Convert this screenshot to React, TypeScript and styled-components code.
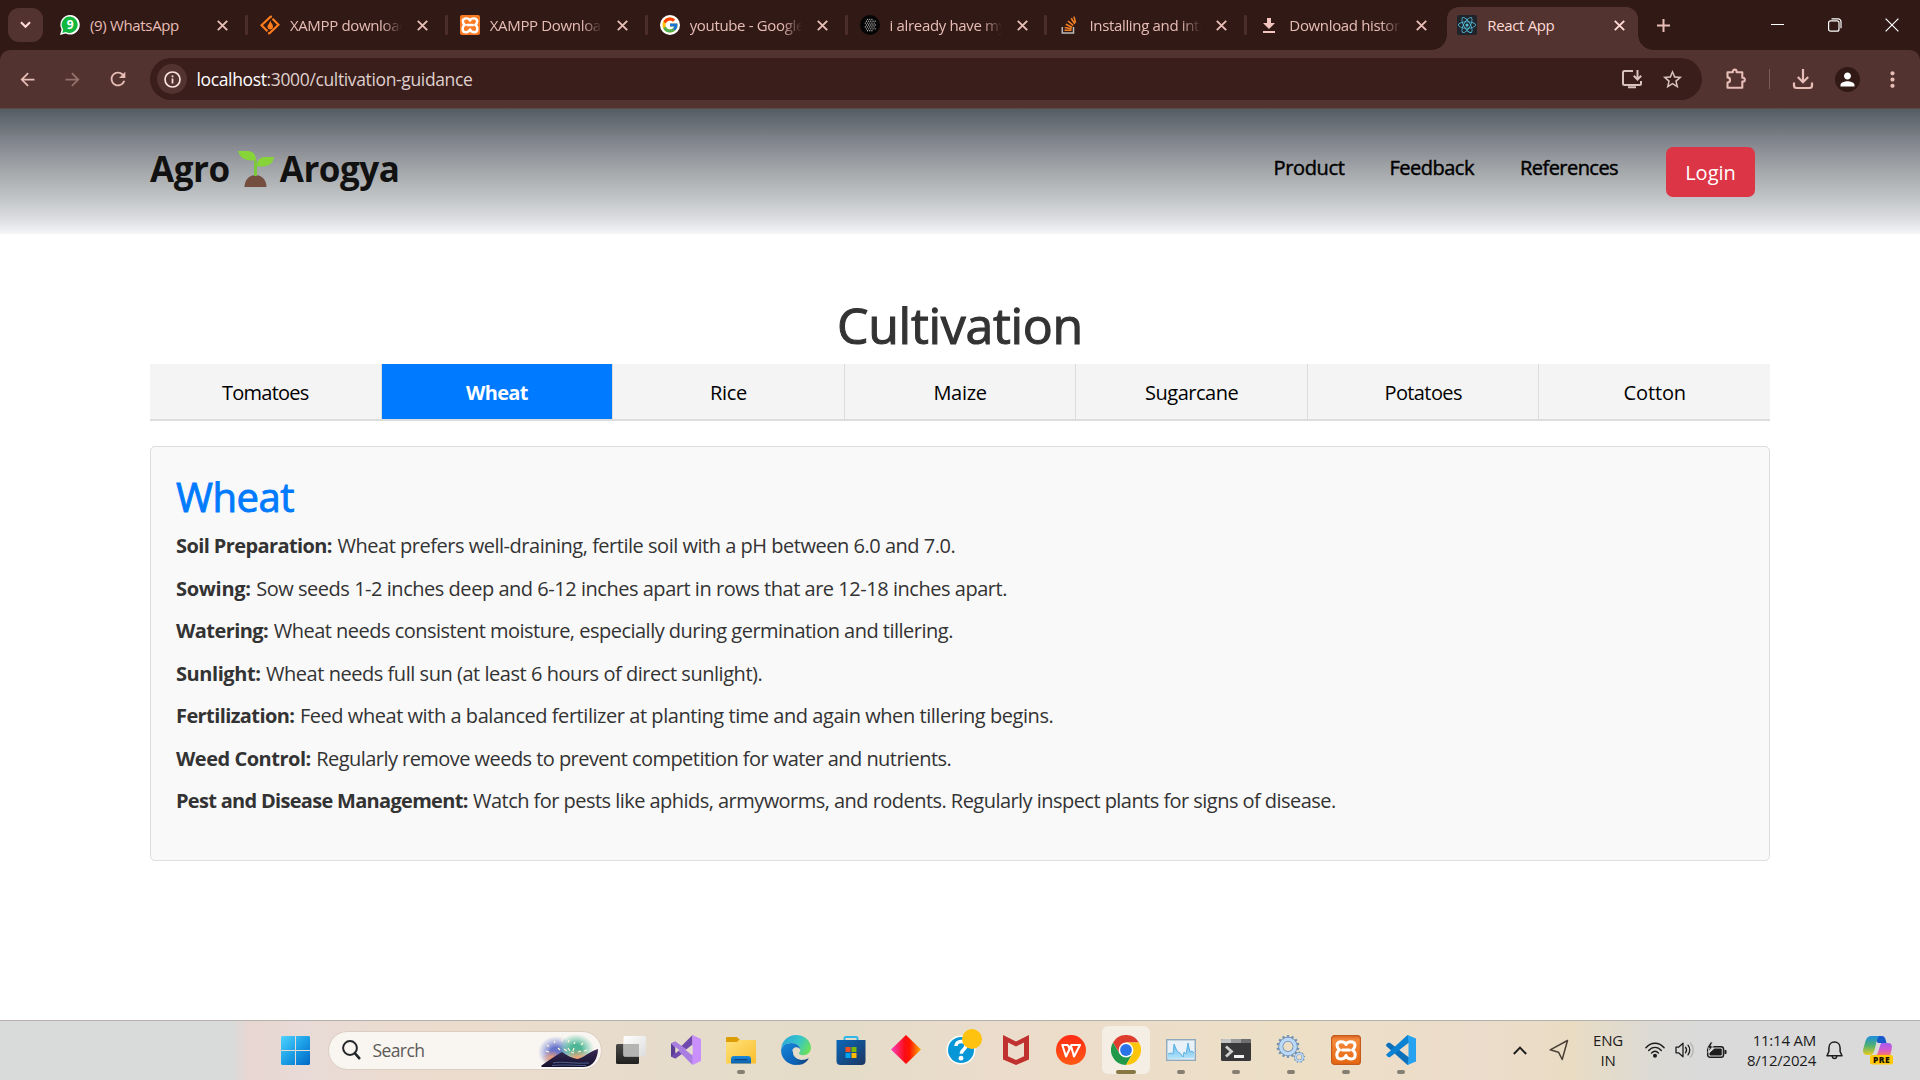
import React from "react";
import styled, { createGlobalStyle } from "styled-components";
import { FcGoogle } from "react-icons/fc";
import { FaReact } from "react-icons/fa";
import {
  MdArrowBack,
  MdArrowForward,
  MdRefresh,
  MdStarBorder,
  MdPerson,
  MdMoreVert,
} from "react-icons/md";

const GlobalStyle = createGlobalStyle`
  *, *::before, *::after { box-sizing: border-box; }
  body { margin: 0; background: #fff; overflow: hidden; }
  #root { font-family: "Open Sans", "Noto Sans", sans-serif; }
  svg { display: block; flex: none; }
`;

const Screen = styled.div`
  width: 1920px;
  height: 1080px;
  display: flex;
  flex-direction: column;
  overflow: hidden;
`;

/* ---------- browser chrome ---------- */

const TabStrip = styled.div`
  height: 50px;
  flex: none;
  display: flex;
  background: #311915;
  color: #e7bdb6;
`;

const TabSearch = styled.div`
  width: 35px;
  height: 34px;
  margin: 8px 5px 0 8px;
  border-radius: 11px;
  background: #523330;
  display: flex;
  align-items: center;
  justify-content: center;
`;

const BrowserTab = styled.div<{ $active?: boolean }>`
  position: relative;
  width: ${(p) => (p.$active ? 191 : 199.9)}px;
  height: ${(p) => (p.$active ? 43 : 50)}px;
  margin-top: ${(p) => (p.$active ? 7 : 0)}px;
  padding: ${(p) => (p.$active ? "0 12px 7px 10px" : "0 0 0 12px")};
  border-radius: 12px 12px 0 0;
  background: ${(p) => (p.$active ? "#523330" : "transparent")};
  color: ${(p) => (p.$active ? "#ffdad5" : "inherit")};
  display: flex;
  align-items: center;

  &::before,
  &::after {
    content: "";
    display: ${(p) => (p.$active ? "block" : "none")};
    position: absolute;
    bottom: 0;
    width: 15px;
    height: 15px;
  }
  &::before {
    left: -15px;
    background: radial-gradient(circle at 0 0, transparent 14.5px, #523330 15px);
  }
  &::after {
    right: -15px;
    background: radial-gradient(circle at 100% 0, transparent 14.5px, #523330 15px);
  }
`;

const Favicon = styled.span`
  width: 20px;
  height: 20px;
  flex: none;
  display: flex;
  align-items: center;
  justify-content: center;
`;

const TabTitle = styled.span<{ $fade?: boolean }>`
  width: 112px;
  margin: 0 15px 0 10px;
  font-size: 15px;
  line-height: 24px;
  letter-spacing: -0.34px;
  white-space: nowrap;
  overflow: hidden;
  mask-image: ${(p) => (p.$fade ? "linear-gradient(90deg, #000 82%, transparent)" : "none")};
`;

const TabDivider = styled.span`
  width: 3px;
  height: 20px;
  margin-left: auto;
  border-radius: 1px;
  background: #4b2d29;
`;

const NewTab = styled.div`
  width: 40px;
  margin-left: 5px;
  display: flex;
  align-items: center;
  justify-content: center;
`;

const WindowControls = styled.div`
  margin-left: auto;
  display: flex;
  color: #fff;
`;

const WindowButton = styled.span`
  width: 57px;
  height: 49px;
  display: flex;
  align-items: center;
  justify-content: center;
`;

const ToolbarBack = styled.div`
  height: 59px;
  flex: none;
  background: #311915;
`;

const Toolbar = styled.div`
  height: 59px;
  padding: 8px 0 0 12px;
  display: flex;
  border-radius: 10px 10px 0 0;
  border-bottom: 1px solid #5e4a47;
  background: #523330;
  color: #e7bdb6;
`;

const ToolButton = styled.span<{ $w: number; $dim?: boolean }>`
  width: ${(p) => p.$w}px;
  height: 42px;
  flex: none;
  display: flex;
  align-items: center;
  justify-content: center;
  opacity: ${(p) => (p.$dim ? 0.45 : 1)};
`;

const Omnibox = styled.div`
  width: 1552px;
  height: 42px;
  flex: none;
  padding: 0 10px 0 7px;
  display: flex;
  align-items: center;
  border-radius: 21px;
  background: #3a1e1b;
  color: #d8c2be;
`;

const SiteInfo = styled.span`
  width: 30px;
  height: 30px;
  display: flex;
  align-items: center;
  justify-content: center;
  border-radius: 50%;
  background: #523330;
  color: #fbe3df;
`;

const Url = styled.span`
  flex: 1;
  padding: 0 0 1px 9.500px;
  font-size: 17.5px;
  letter-spacing: -0.36px;
  color: #dfd0cd;

  b {
    font-weight: 400;
    color: #fff;
  }
`;

const OmniIcon = styled.span`
  width: 40px;
  display: flex;
  justify-content: center;
`;

const ToolDivider = styled.span`
  width: 1px;
  height: 20px;
  flex: none;
  margin: 11px 0;
  background: #7d5c57;
`;

const Avatar = styled.span`
  width: 25px;
  height: 25px;
  display: flex;
  align-items: center;
  justify-content: center;
  border-radius: 50%;
  background: #311915;
  color: #fff;
`;

/* ---------- web page ---------- */

const Page = styled.div`
  flex: 1;
  background: #fff;
`;

const Header = styled.header`
  height: 125px;
  padding: 0 165px 0 150px;
  display: flex;
  align-items: center;
  justify-content: space-between;
  background: linear-gradient(180deg, #545d64 0%, #83868e 27%, #9fa3a6 46%, #c4c7ca 73%, #dcdde0 88%, #f5f6f8 100%);
`;

const Brand = styled.div`
  display: flex;
  align-items: center;
  padding-bottom: 6px;
  font-size: 35px;
  line-height: 52px;
  font-weight: 700;
  letter-spacing: -0.45px;
  color: #111;

  svg {
    margin: 0 6px 0 8px;
  }
`;

const Nav = styled.nav`
  display: flex;
  align-items: center;
`;

const NavLink = styled.a<{ $w: number; $ls: number }>`
  width: ${(p) => p.$w}px;
  padding-bottom: 7px;
  font-size: 20px;
  line-height: 30px;
  -webkit-text-stroke: 0.45px #000;
  letter-spacing: ${(p) => p.$ls}px;
  color: #000;
`;

const LoginButton = styled.button`
  height: 50px;
  width: 89px;
  padding: 2px 0 0;
  border: 0;
  border-radius: 7px;
  background: #dc3545;
  color: #fff;
  font: 400 20px/30px "Open Sans", "Noto Sans", sans-serif;
`;

const Main = styled.main`
  padding: 61px 150px 0;
`;

const Title = styled.h1`
  margin: 0 0 9px;
  font-size: 50px;
  line-height: 60px;
  font-weight: 400;
  -webkit-text-stroke: 1.100px #333;
  letter-spacing: -0.3px;
  text-align: center;
  color: #333;
`;

const CropTabs = styled.div`
  display: flex;
  height: 57px;
  margin-bottom: 25px;
  border-bottom: 2px solid #ddd;
`;

const CropTab = styled.div<{ $active?: boolean; $ls: number }>`
  flex: 1;
  padding: 14px 0 11px;
  border-right: 1px solid #ddd;
  background: ${(p) => (p.$active ? "#007bff" : "#f4f4f4")};
  color: ${(p) => (p.$active ? "#fff" : "#000")};
  font-size: 20px;
  line-height: 30px;
  font-weight: ${(p) => (p.$active ? 700 : 400)};
  letter-spacing: ${(p) => p.$ls}px;
  text-align: center;

  &:last-child {
    border-right: 0;
  }
`;

const Card = styled.section`
  height: 415px;
  padding: 26px 25px 0;
  border: 1px solid #ddd;
  border-radius: 5px;
  background: #f9f9f9;
`;

const CardTitle = styled.h2`
  margin: 0 0 10px;
  font-size: 40px;
  line-height: 48px;
  font-weight: 400;
  -webkit-text-stroke: 0.9px #007bff;
  letter-spacing: -0.5px;
  color: #007bff;
`;

const Tip = styled.p<{ $ls: number; $bls: number }>`
  margin: 0 0 12.5px;
  font-size: 20px;
  line-height: 30px;
  letter-spacing: ${(p) => p.$ls}px;
  white-space: nowrap;
  color: #333;

  strong {
    margin-right: 0.8px;
    font-weight: 700;
    letter-spacing: ${(p) => p.$bls}px;
  }
`;

/* ---------- taskbar ---------- */

const Taskbar = styled.footer`
  height: 60px;
  flex: none;
  display: flex;
  align-items: center;
  padding: 0 0 1px 281px;
  border-top: 1px solid #b5b0ab;
  background: linear-gradient(
    90deg, #d9dada 0, #d9dada 232px, #e7d6d2 248px, #e8dad6 300px, #ecdccf 420px, #e6dccb 680px,
    #e4dcc8 830px, #ebdccb 1000px, #ecdfc6 1300px, #ecdccb 1480px, #e9dcc3 1570px, #dbdad6 1660px, #dadada 1700px
  );
  color: #1c1c1c;
`;

const SearchPill = styled.div`
  width: 274px;
  height: 39px;
  margin: 0 2.500px 0 17.500px;
  padding-left: 13px;
  display: flex;
  align-items: center;
  border: 1px solid #dccdc1;
  border-radius: 20px;
  background: #f9f5f0;
  overflow: hidden;
`;

const SearchLabel = styled.span`
  width: 165px;
  margin-left: 12px;
  font-size: 17.5px;
  letter-spacing: -0.6px;
  color: #5c5a58;
`;

const Apps = styled.div`
  display: flex;
  margin-left: -0.5px;
`;

const AppSlot = styled.div<{ $focused?: boolean }>`
  width: 48px;
  height: 48px;
  margin: 0 3.5px;
  display: flex;
  flex-direction: column;
  align-items: center;
  border-radius: 6px;
  background: ${(p) => (p.$focused ? "#f5eee4" : "transparent")};

  svg {
    margin: 9px 0 5px;
  }
`;

const Running = styled.span<{ $focused?: boolean }>`
  width: ${(p) => (p.$focused ? 20 : 8)}px;
  height: 4px;
  border-radius: 2px;
  background: ${(p) => (p.$focused ? "#877744" : "#857e72")};
`;

const Tray = styled.div`
  margin-left: auto;
  padding-right: 18px;
  display: flex;
  align-items: center;
`;

const TrayItem = styled.span<{ $w: number }>`
  width: ${(p) => p.$w}px;
  display: flex;
  justify-content: center;
`;

const TrayText = styled.div<{ $w: number; $right?: boolean; $ls: number }>`
  width: ${(p) => p.$w}px;
  padding-bottom: 1px;
  font-size: 15px;
  line-height: 20px;
  letter-spacing: ${(p) => p.$ls}px;
  white-space: nowrap;
  text-align: ${(p) => (p.$right ? "right" : "center")};
`;

/* ---------- drawings ---------- */

const CloseMark = () => (
  <svg width="11" height="11" viewBox="0 0 11 11" stroke="currentColor" strokeWidth="1.9">
    <path d="M.8.8l9.4 9.4M10.2.8L.8 10.2" />
  </svg>
);

const WhatsAppIcon = () => (
  <svg width="20" height="20" viewBox="0 0 20 20">
    <path d="M10.2 0A9.8 9.8 0 0 0 1.6 14.6L0 20l5.600-1.4A9.8 9.8 0 1 0 10.200 0z" fill="#fff" />
    <path d="M10.200 1.500A8.200 8.200 0 0 0 3.200 14.400L2.200 17.900l3.600-.9A8.200 8.200 0 1 0 10.200 1.500z" fill="#12b83e" />
    <text x="10.2" y="14.200" textAnchor="middle" fontSize="12" fontWeight="700" fill="#fff">9</text>
  </svg>
);

const SourceForgeIcon = () => (
  <svg width="20" height="20" viewBox="0 0 20 20" fill="none" stroke="#ff7d1a" strokeWidth="2.2">
    <path d="M12 1.500L10.500 1.800 1.500 10.300 7.500 16.300M8 18.500l1.500-.3 9-8.500L12.500 3.700" />
    <path d="M10.300 5.500c.5 2.500 2.700 3.500 2.700 6 0 1.800-1.200 3-2.800 3S7.500 13.300 7.500 11.700c0-1.600 1.600-2.500 2.800-6.200z" fill="#ff7d1a" stroke="none" />
  </svg>
);

const XamppTile = styled.span`
  width: 20px;
  height: 20px;
  display: flex;
  align-items: center;
  justify-content: center;
  border-radius: 2px;
  background: #fb7a24;
  color: #fff;
`;

const XamppMark = () => (
  <g fill="none" stroke="#fff" strokeLinejoin="round" strokeLinecap="round">
    <path
      d="M15 9.500C13.800 6 6.500 5.500 6 10c-.1 2 .9 3.600 2.500 5C4.500 17.500 5 24 9.500 24c3 0 4.800-1.200 5.500-3.500.7 2.300 2.500 3.500 5.500 3.500C25 24 25.500 17.500 21.500 15c1.600-1.400 2.600-3 2.500-5-.5-4.500-7.800-4-9-.5z"
      strokeWidth="3"
    />
    <path d="M11.500 15h7" strokeWidth="3" />
  </g>
);

const GoogleDisc = styled.span`
  width: 20px;
  height: 20px;
  display: flex;
  align-items: center;
  justify-content: center;
  border-radius: 50%;
  background: #fff;
`;

const DotsIcon = () => (
  <svg width="20" height="20" viewBox="0 0 20 20">
    <circle cx="10" cy="10" r="10" fill="#050505" />
    {[0, 1, 2, 3, 4, 5, 6].map((r) =>
      [0, 1, 2, 3, 4].map((c) => {
        const x = 5.300 + c * 2.200 + (r % 2 ? 1.100 : 0);
        const y = 4.300 + r * 1.900;
        return Math.hypot(x - 10, y - 10) < 6.5 ? <circle key={`${r}${c}`} cx={x} cy={y} r=".65" fill="#c9c9c9" /> : null;
      })
    )}
  </svg>
);

const StackIcon = () => (
  <svg width="16" height="18" viewBox="0 0 16 18" fill="none">
    <path d="M1.300 11v5.900h11.200V11" stroke="#bcbbbb" strokeWidth="1.500" />
    <path d="M3.500 14.300h7M3.700 11.500l6.900 1.300M4.800 8.300l6.300 2.900M7 5l5.200 4.400M10.200 2.300l3.600 5.600M13 .6l1.500 6" stroke="#f48024" strokeWidth="1.600" />
  </svg>
);

const DownloadGlyph = () => (
  <svg width="12" height="15" viewBox="0 0 12 15" fill="#f2c6bf">
    <path d="M4 0h4v5h4l-6 6-6-6h4zM0 13h12v2H0z" />
  </svg>
);

const ReactTile = styled.span`
  width: 20px;
  height: 20px;
  display: flex;
  align-items: center;
  justify-content: center;
  border-radius: 2px;
  background: #20232a;
  color: #53c1de;
`;

const InstallIcon = () => (
  <svg width="22" height="20" viewBox="0 0 22 20" fill="none" stroke="currentColor" strokeWidth="2">
    <path d="M12 2H3.500A1.500 1.500 0 0 0 2 3.500v11A1.500 1.500 0 0 0 3.500 16h15a1.500 1.500 0 0 0 1.500-1.500V12M16.500 1v9M12.800 6.800l3.700 3.700 3.700-3.700M7 18.300h8" />
  </svg>
);

const PuzzleIcon = () => (
  <svg width="22" height="22" viewBox="0 0 22 22" fill="none" stroke="currentColor" strokeWidth="2.100" strokeLinejoin="round">
    <path d="M2.500 4.200h5.300V3.500a1.900 1.900 0 0 1 3.800 0v.7h5.700v5.600h.6a1.900 1.900 0 0 1 0 3.800h-.6v6.200H2.500v-5.200c3.400-.2 3.400-5 0-5.200z" />
  </svg>
);

const ToolDownloadIcon = () => (
  <svg width="22" height="22" viewBox="0 0 22 22" fill="none" stroke="currentColor" strokeWidth="2.200">
    <path d="M11 1v13M5.800 9l5.200 5.200L16.200 9M2 14.500v3A2.500 2.500 0 0 0 4.500 20h13a2.500 2.500 0 0 0 2.500-2.500v-3" />
  </svg>
);

const InfoIcon = () => (
  <svg width="17" height="17" viewBox="0 0 17 17" fill="none" stroke="currentColor" strokeWidth="1.700">
    <circle cx="8.500" cy="8.500" r="7.500" />
    <path d="M8.500 7.500v5M8.500 4.500v1.700" />
  </svg>
);

const Seedling = () => (
  <svg width="36" height="36" viewBox="0 0 36 36">
    <path d="M6.500 36C6.500 29 11 24 17.500 24S28.500 29 28.500 36z" fill="#744e3f" />
    <path d="M17.500 25V12" stroke="#7bc93a" strokeWidth="3" />
    <path d="M0 0h10c5 0 8 3.500 8 9.500C7 10 2 7 0 0zM36 6H28c-6 0-9 3-9 9.500C30 16 35 13 36 6z" fill="#86d437" />
    <path d="M17.500 18V9" stroke="#7bc93a" strokeWidth="2.600" />
  </svg>
);

const WindowsLogo = () => (
  <svg width="29" height="29" viewBox="0 0 29 29">
    <defs>
      <linearGradient id="win" x1="0" y1="0" x2="1" y2="1">
        <stop offset="0" stopColor="#4fd3ff" />
        <stop offset=".5" stopColor="#1c9fe6" />
        <stop offset="1" stopColor="#0067c5" />
      </linearGradient>
    </defs>
    <path d="M1 0h13v14H0V1zM15 0h13l1 1v13H15zM0 15h14v14H1l-1-1zM15 15h14v13l-1 1H15z" fill="url(#win)" />
  </svg>
);

const Magnifier = () => (
  <svg width="19" height="20" viewBox="0 0 19 20" fill="none" stroke="#23272a">
    <circle cx="8" cy="8" r="6.900" strokeWidth="2" />
    <path d="M12.800 13.200l4.400 5" strokeWidth="2.600" strokeLinecap="round" />
  </svg>
);

const SearchArt = () => (
  <svg width="62" height="37" viewBox="0 0 62 37">
    <defs>
      <radialGradient id="blobA"><stop offset=".3" stopColor="#6874cc" /><stop offset="1" stopColor="#7f8fe0" stopOpacity="0" /></radialGradient>
      <radialGradient id="blobB"><stop offset=".3" stopColor="#4fb597" /><stop offset="1" stopColor="#5ac8a8" stopOpacity="0" /></radialGradient>
      <radialGradient id="blobC"><stop offset="0" stopColor="#f4a070" /><stop offset="1" stopColor="#f4a070" stopOpacity="0" /></radialGradient>
      <linearGradient id="hill" x1="0" y1="0" x2="0" y2="1"><stop offset="0" stopColor="#3a2a55" /><stop offset="1" stopColor="#14122e" /></linearGradient>
    </defs>
    <ellipse cx="18" cy="20" rx="18" ry="16" fill="url(#blobA)" />
    <ellipse cx="38" cy="17" rx="18" ry="15" fill="url(#blobB)" />
    <ellipse cx="40" cy="26" rx="14" ry="9" fill="url(#blobC)" />
    <ellipse cx="14" cy="26" rx="10" ry="8" fill="url(#blobC)" />
    <path d="M9 13l2 1.500M16 9l1 2M24 7v2.500M31 8l-1 2.500M8 19l3 1M37 10l-1 2M45 11l-2 2M30 16l2 3M36 16l-1 3M40 20l3-1M26 17l3 2M49 18l-3 1M20 16l2 2M33 20l3 1" stroke="#fff6d8" strokeWidth="1.200" />
    <path d="M3 34C9 29 16 25 24 20c6 4 10 6 15 7 7-1 11-7 21-10 0 9-5 18-14 18H4z" fill="url(#hill)" />
    <path d="M15 31c10-2 20 1 36 0M14 33.500c12-1 20 0 34 0" fill="none" stroke="#5d74a8" strokeWidth=".8" />
  </svg>
);

const TaskViewIcon = () => (
  <svg width="30" height="30" viewBox="0 0 30 30">
    <defs>
      <linearGradient id="tvd" x1="0" y1="0" x2="0" y2="1"><stop offset="0" stopColor="#4a4a48" /><stop offset="1" stopColor="#20201f" /></linearGradient>
      <linearGradient id="tvl" x1="0" y1="0" x2="1" y2="1"><stop offset="0" stopColor="#fff" /><stop offset="1" stopColor="#dcdcdc" /></linearGradient>
    </defs>
    <rect x="0" y="9" width="23" height="20" rx="1.500" fill="url(#tvd)" />
    <rect x="7.500" y="1" width="22.500" height="20.500" rx="1.500" fill="url(#tvl)" />
    <path d="M7.500 9H23v12.500H9a1.500 1.500 0 0 1-1.500-1.500z" fill="#b4b4b2" />
  </svg>
);

const VisualStudioIcon = () => (
  <svg width="30" height="30" viewBox="0 0 30 30">
    <path d="M0 8.500L4.500 6.500V23.500L0 21.500z" fill="#5b3c94" />
    <path d="M4.500 23.500L0 21.500 21.500 0v11.500z" fill="#6f4aac" />
    <path d="M0 8.500L4.500 6.500 23 19.500 21.500 30z" fill="#a87ee0" />
    <path d="M21.500 0L30 4v22l-8.500 4z" fill="#c98ffa" />
    <path d="M21.500 9.500V20.500L14.500 15z" fill="#e6dccb" />
    <path d="M4.500 12v6.500L8.300 15z" fill="#e6dccb" />
  </svg>
);

const ExplorerIcon = () => (
  <svg width="30" height="30" viewBox="0 0 30 30">
    <defs>
      <linearGradient id="fold" x1="0" y1="0" x2="1" y2="1"><stop offset="0" stopColor="#ffe07a" /><stop offset="1" stopColor="#f9bf2c" /></linearGradient>
      <linearGradient id="foldb" x1="0" y1="0" x2="0" y2="1"><stop offset="0" stopColor="#1a8ad8" /><stop offset="1" stopColor="#0c61ae" /></linearGradient>
    </defs>
    <path d="M1 2h10l3 3h15a1 1 0 0 1 1 1v8H0V3a1 1 0 0 1 1-1z" fill="#dd9d06" />
    <path d="M0 7h11l2-2h17v23a.5.5 0 0 1-.5.5H.5A.5.5 0 0 1 0 28z" fill="url(#fold)" />
    <path d="M5 28.500V24a3 3 0 0 1 3-3h14a3 3 0 0 1 3 3v4.500z" fill="url(#foldb)" />
    <path d="M8.500 24.700h13" stroke="#0a4a8c" strokeWidth="1.400" />
  </svg>
);

const EdgeIcon = () => (
  <svg width="30" height="30" viewBox="0 0 30 30">
    <defs>
      <linearGradient id="ea" x1="0" y1=".2" x2="1" y2=".6"><stop offset="0" stopColor="#2aa5dc" /><stop offset=".55" stopColor="#36c6c8" /><stop offset="1" stopColor="#6be05a" /></linearGradient>
      <linearGradient id="eb" x1="0" y1="0" x2=".6" y2="1"><stop offset="0" stopColor="#1788d8" /><stop offset="1" stopColor="#0b5fb5" /></linearGradient>
      <linearGradient id="ec" x1="0" y1="0" x2="1" y2="0"><stop offset="0" stopColor="#0f6cc0" /><stop offset="1" stopColor="#123f7d" /></linearGradient>
    </defs>
    <path d="M.2 13.500C1 5.500 7.500 0 15 0c8.500 0 15 6 15 12.800 0 4.500-3.500 7.400-7.500 7.400-3 0-4.500-.9-4.500-2 0-.8 1.300-1.200 1.300-3.500C19.300 11 15.500 8 10.500 8 5.500 8 1.500 10.500.2 13.500z" fill="url(#ea)" />
    <path d="M.1 14.500C1.200 10.800 5 8 10.500 8c5 0 8.800 3 8.800 6.500-1.800-3.200-8.300-3.500-8.300 3.500 0 6 5 11.600 8.500 11-1.500.7-3.100 1-4.500 1C6.500 30-.5 23 .1 14.500z" fill="url(#eb)" />
    <path d="M12.300 15c-2 7 5 10.800 10.500 9.800 2.500-.5 4-1.300 5-1.600C26 27 21 30.500 17.500 29.500 12 28 8 20 12.300 15z" fill="url(#ec)" />
  </svg>
);

const StoreIcon = () => (
  <svg width="30" height="30" viewBox="0 0 30 30">
    <defs><linearGradient id="store" x1="0" y1="0" x2="1" y2="1"><stop offset="0" stopColor="#0a68b8" /><stop offset="1" stopColor="#1d3561" /></linearGradient></defs>
    <path d="M8.500 7V3.500a1.500 1.500 0 0 1 1.500-1.500h10a1.500 1.500 0 0 1 1.500 1.500V7" fill="none" stroke="#30b7ea" strokeWidth="2" />
    <path d="M.5 5h29v21a4 4 0 0 1-4 4h-21a4 4 0 0 1-4-4z" fill="url(#store)" />
    <path d="M9.500 12h5v5h-5z" fill="#f25022" />
    <path d="M15.500 12h5v5h-5z" fill="#7fba00" />
    <path d="M9.500 18h5v5h-5z" fill="#00a4ef" />
    <path d="M15.500 18h5v5h-5z" fill="#ffb900" />
  </svg>
);

const DiamondIcon = () => (
  <svg width="30" height="30" viewBox="0 0 30 30">
    <defs><linearGradient id="dia"><stop offset="0" stopColor="#ff3fc0" /><stop offset=".45" stopColor="#fb0d18" /><stop offset=".62" stopColor="#ff1500" /><stop offset="1" stopColor="#ffae00" /></linearGradient></defs>
    <path d="M15 0l15 14.500L15 29 0 14.500z" fill="url(#dia)" />
  </svg>
);

const HelpIcon = () => (
  <svg width="30" height="30" viewBox="0 0 30 30" overflow="visible">
    <circle cx="15" cy="15" r="14.500" fill="#fff" />
    <circle cx="15" cy="15" r="13" fill="#0796d6" />
    <path d="M10 11c0-6 10-6 10-.5 0 4-4.700 4-4.700 8.300" fill="none" stroke="#fff" strokeWidth="3.600" />
    <circle cx="15" cy="23.200" r="2.400" fill="#fff" />
    <circle cx="26" cy="4" r="10" fill="#ffc20e" />
  </svg>
);

const McAfeeIcon = () => (
  <svg width="28" height="30" viewBox="0 0 28 30">
    <path d="M1 0l13 6.500L27 0v24.500L14 30 1 24.500zM6 7.500v13.800l8 3.700 8-3.700V7.500l-8 4z" fill="#c0302f" fillRule="evenodd" />
  </svg>
);

const WpsIcon = () => (
  <svg width="30" height="30" viewBox="0 0 30 30">
    <defs><linearGradient id="wps" x1="0" y1="0" x2="0" y2="1"><stop offset="0" stopColor="#ff2a14" /><stop offset="1" stopColor="#ff5a14" /></linearGradient></defs>
    <circle cx="15" cy="15" r="15" fill="url(#wps)" />
    <path d="M5.500 10h6.500M6.300 10l3.700 11.500L15 11l3 10.500L24 10h-9.500M12 10l2 5" fill="none" stroke="#fff" strokeWidth="2.100" strokeLinejoin="round" />
  </svg>
);

const ChromeIcon = () => (
  <svg width="30" height="30" viewBox="0 0 30 30">
    <circle cx="15" cy="15" r="15" fill="#fff" />
    <path d="M15 7.500h13A15 15 0 0 0 2 7.500l6.500 11.250z" fill="#df3c30" />
    <path d="M2 7.500A15 15 0 0 0 15 30l6.500-11.250h-13z" fill="#22994a" />
    <path d="M28 7.500H15l6.500 11.250L15 30A15 15 0 0 0 28 7.500z" fill="#fdc60b" />
    <circle cx="15" cy="15" r="7.400" fill="#fff" />
    <circle cx="15" cy="15" r="5.900" fill="#2a74e8" />
  </svg>
);

const PerfIcon = () => (
  <svg width="30" height="30" viewBox="0 0 30 30">
    <defs><linearGradient id="perf" x1="0" y1="0" x2="0" y2="1"><stop offset="0" stopColor="#5fb9ea" /><stop offset="1" stopColor="#b6e4fb" /></linearGradient></defs>
    <rect x=".7" y="4.700" width="28.600" height="20.600" fill="#e8f1f7" stroke="#8fa9bd" strokeWidth="1.400" />
    <path d="M2 24v-5l3-1 2 1 1-10 3 7 4 3 2 3 1-5 2 2 2-11 2 9 2-1 2 2v5z" fill="url(#perf)" />
    <path d="M2 19l3-1 2 1 1-10 3 7 4 3 2 3 1-5 2 2 2-11 2 9 2-1 2 2" fill="none" stroke="#4aa6db" strokeWidth=".8" />
  </svg>
);

const TerminalIcon = () => (
  <svg width="30" height="30" viewBox="0 0 30 30">
    <rect y="4" width="30" height="22" rx="1.500" fill="#38383a" />
    <path d="M1.500 4H10v4H0V5.500A1.500 1.500 0 0 1 1.500 4z" fill="#c4c4c4" />
    <path d="M10 4h10v4H10z" fill="#999" />
    <path d="M20 4h8.500A1.500 1.500 0 0 1 30 5.500V8H20z" fill="#6e6e6e" />
    <path d="M5 11.500l5.500 5-5.500 5" fill="none" stroke="#cfcfcf" strokeWidth="2.800" />
    <path d="M13 20h10v3H13z" fill="#f2f2f2" />
  </svg>
);

const Gear = ({ cx, cy, r, teeth }: { cx: number; cy: number; r: number; teeth: number }) => (
  <g transform={`translate(${cx} ${cy})`}>
    {Array.from({ length: teeth }, (_, i) => (
      <rect key={i} x={-r * 0.13} y={-r * 1.3} width={r * 0.26} height={r * 0.4} fill="#7596b8" transform={`rotate(${(360 / teeth) * i})`} />
    ))}
    <circle r={r * 0.82} fill="none" stroke="#6285aa" strokeWidth={r * 0.56} />
    <circle r={r * 0.82} fill="none" stroke="#bcd8f8" strokeWidth={r * 0.4} />
  </g>
);

const GearsIcon = () => (
  <svg width="30" height="30" viewBox="0 0 30 30">
    <Gear cx={12} cy={11.5} r={8.8} teeth={14} />
    <Gear cx={23.3} cy={22.3} r={4.5} teeth={9} />
  </svg>
);

const XamppApp = () => (
  <svg width="30" height="30" viewBox="0 0 30 30">
    <defs><linearGradient id="xa" x1="0" y1="0" x2="0" y2="1"><stop offset="0" stopColor="#d9672a" /><stop offset=".15" stopColor="#f58a3c" /><stop offset="1" stopColor="#e5660f" /></linearGradient></defs>
    <rect x=".6" y=".6" width="28.800" height="28.800" rx="3" fill="url(#xa)" stroke="#c45a1c" strokeWidth="1.200" />
    <XamppMark />
  </svg>
);

const VsCodeIcon = () => (
  <svg width="30" height="30" viewBox="0 0 30 30">
    <path d="M0 9.700l2-1.900 1.900-.1L23 22.500V29l-1.500 1L.2 11z" fill="#0c6fba" />
    <path d="M0 19.800L21.500 0 23 1v6.500L3.900 22.200l-1.900-.1z" fill="#0b82d2" />
    <path d="M21.500 0L30 3.500v23L21.500 30l1-7.500v-15z" fill="#26a2f0" />
  </svg>
);

const ChevronUp = () => (
  <svg width="14" height="9" viewBox="0 0 14 9" fill="none" stroke="#1c1c1c" strokeWidth="1.900"><path d="M.8 8L7 1.600 13.200 8" /></svg>
);

const LocationIcon = () => (
  <svg width="20" height="22" viewBox="0 0 20 22" fill="none" stroke="#4a4036" strokeWidth="1.500" strokeLinejoin="round"><path d="M18.500 1.500L1.200 10.800l8.300 2.400 3.700 7.300z" /></svg>
);

const WifiIcon = () => (
  <svg width="20" height="16" viewBox="0 0 20 16" fill="none" stroke="#1c1c1c" strokeWidth="1.400" strokeLinecap="round">
    <path d="M.9 5.800c5-6 13.200-6 18.200 0M3.700 8.500c3.600-4.200 9-4.200 12.600 0M6.500 11.100c2-2.400 5-2.400 7 0" />
    <circle cx="10" cy="13.700" r="1.300" fill="#1c1c1c" />
  </svg>
);

const VolumeIcon = () => (
  <svg width="20" height="18" viewBox="0 0 20 18" fill="none" stroke="#1c1c1c" strokeWidth="1.300" strokeLinecap="round" strokeLinejoin="round">
    <path d="M1 6.200h2.500L8 2.200v13.600l-4.500-4H1zM10.500 6.200c1.200 1.600 1.200 4 0 5.600M13 4.200c2.300 2.700 2.300 6.900 0 9.600" />
    <path d="M15.500 2c3.600 4 3.600 10 0 14" stroke="#b5b2ad" />
  </svg>
);

const BatteryIcon = () => (
  <svg width="21" height="17" viewBox="0 0 21 17">
    <rect x="1.700" y="4.700" width="15.800" height="10.500" rx="2.300" fill="none" stroke="#1c1c1c" strokeWidth="1.500" />
    <path d="M4 13V11l4.500-4h6.700v6z" fill="#1c1c1c" stroke="#1c1c1c" />
    <path d="M18.500 7.700l2 .5v3.500l-2 .5z" fill="#1c1c1c" />
    <path d="M4.500 0L.8 6h2.500l-1.300 4.500L7.200 4H4.900L6.700 0z" fill="#1c1c1c" stroke="#dbdada" strokeWidth=".8" />
  </svg>
);

const BellIcon = () => (
  <svg width="17" height="19" viewBox="0 0 17 19" fill="none" stroke="#1c1c1c" strokeWidth="1.500" strokeLinejoin="round">
    <path d="M8.500 1C5 1 2.900 3.600 2.900 7v3.500L1 14.800h15l-1.900-4.300V7c0-3.400-2.100-6-5.600-6zM6.200 15.200c.3 3 4.300 3 4.600 0" />
  </svg>
);

const CopilotIcon = () => (
  <svg width="30" height="30" viewBox="0 0 30 30">
    <defs>
      <linearGradient id="ca" x1="0" y1="0" x2="0" y2="1"><stop offset="0" stopColor="#1c8fe0" /><stop offset=".5" stopColor="#4fb070" /><stop offset="1" stopColor="#e8cc20" /></linearGradient>
      <linearGradient id="cb" x1="0" y1="0" x2="0" y2="1"><stop offset="0" stopColor="#a45cf0" /><stop offset=".5" stopColor="#d05ad0" /><stop offset="1" stopColor="#ff7a58" /></linearGradient>
    </defs>
    <path d="M10 1h9c3 0 3.500 3 4.500 7H15z" fill="#1759c9" />
    <path d="M8.500 1h8c-2 1-2.500 4-3.500 8s-2 10-5 11H4c-4 0-4.500-3-3.500-7l2-7c1-3.500 3-5 6-5z" fill="url(#ca)" />
    <path d="M18 8h7c4 0 4.500 3 3.500 7l-1.500 6H11c3 0 4-3 5-7z" fill="url(#cb)" />
    <rect x="7" y="20" width="23" height="9.500" rx="2" fill="#ffc90a" />
    <text x="18.500" y="28" textAnchor="middle" fontSize="8.500" fontWeight="800" letterSpacing=".4" fill="#1b1400">PRE</text>
  </svg>
);

/* ---------- data ---------- */

const browserTabs: { title: string; icon: React.ReactNode; fade?: boolean }[] = [
  { title: "(9) WhatsApp", icon: <WhatsAppIcon /> },
  { title: "XAMPP download", icon: <SourceForgeIcon />, fade: true },
  {
    title: "XAMPP Download",
    icon: <XamppTile><svg width="20" height="20" viewBox="2.500 2.500 25 25"><XamppMark /></svg></XamppTile>,
    fade: true,
  },
  { title: "youtube - Google", icon: <GoogleDisc><FcGoogle size={18} /></GoogleDisc>, fade: true },
  { title: "i already have my", icon: <DotsIcon />, fade: true },
  { title: "Installing and inte", icon: <StackIcon />, fade: true },
  { title: "Download history", icon: <DownloadGlyph />, fade: true },
];

const crops = [
  { name: "Tomatoes", ls: -0.75 },
  { name: "Wheat", ls: -0.65 },
  { name: "Rice", ls: -0.3 },
  { name: "Maize", ls: -0.3 },
  { name: "Sugarcane", ls: -0.5 },
  { name: "Potatoes", ls: -0.6 },
  { name: "Cotton", ls: -0.15 },
];

const tips = [
  { label: "Soil Preparation:", text: "Wheat prefers well-draining, fertile soil with a pH between 6.0 and 7.0.", ls: -0.48, bls: -0.6 },
  { label: "Sowing:", text: "Sow seeds 1-2 inches deep and 6-12 inches apart in rows that are 12-18 inches apart.", ls: -0.47, bls: -0.3 },
  { label: "Watering:", text: "Wheat needs consistent moisture, especially during germination and tillering.", ls: -0.51, bls: -0.56 },
  { label: "Sunlight:", text: "Wheat needs full sun (at least 6 hours of direct sunlight).", ls: -0.46, bls: -0.43 },
  { label: "Fertilization:", text: "Feed wheat with a balanced fertilizer at planting time and again when tillering begins.", ls: -0.45, bls: -0.6 },
  { label: "Weed Control:", text: "Regularly remove weeds to prevent competition for water and nutrients.", ls: -0.55, bls: -0.48 },
  { label: "Pest and Disease Management:", text: "Watch for pests like aphids, armyworms, and rodents. Regularly inspect plants for signs of disease.", ls: -0.54, bls: -0.7 },
];

const apps: { icon: React.ReactNode; running?: boolean; focused?: boolean }[] = [
  { icon: <TaskViewIcon /> },
  { icon: <VisualStudioIcon /> },
  { icon: <ExplorerIcon />, running: true },
  { icon: <EdgeIcon /> },
  { icon: <StoreIcon /> },
  { icon: <DiamondIcon /> },
  { icon: <HelpIcon /> },
  { icon: <McAfeeIcon /> },
  { icon: <WpsIcon /> },
  { icon: <ChromeIcon />, running: true, focused: true },
  { icon: <PerfIcon />, running: true },
  { icon: <TerminalIcon />, running: true },
  { icon: <GearsIcon />, running: true },
  { icon: <XamppApp />, running: true },
  { icon: <VsCodeIcon />, running: true },
];

export default function App() {
  return (
    <Screen>
      <GlobalStyle />
      <TabStrip>
        <TabSearch>
          <svg width="11" height="8" viewBox="0 0 11 8" fill="none" stroke="#ffdad5" strokeWidth="2.200"><path d="M1 1.200l4.500 4.500L10 1.200" /></svg>
        </TabSearch>
        {browserTabs.map((t, i) => (
          <BrowserTab key={i}>
            <Favicon>{t.icon}</Favicon>
            <TabTitle $fade={t.fade}>{t.title}</TabTitle>
            <CloseMark />
            {i < browserTabs.length - 1 && <TabDivider />}
          </BrowserTab>
        ))}
        <BrowserTab $active>
          <Favicon><ReactTile><FaReact size={18} /></ReactTile></Favicon>
          <TabTitle>React App</TabTitle>
          <CloseMark />
        </BrowserTab>
        <NewTab>
          <svg width="13" height="13" viewBox="0 0 13 13" stroke="currentColor" strokeWidth="2"><path d="M6.500 0v13M0 6.500h13" /></svg>
        </NewTab>
        <WindowControls>
          <WindowButton><svg width="13" height="1" viewBox="0 0 13 1"><path d="M0 0h13v1H0z" fill="#fff" /></svg></WindowButton>
          <WindowButton>
            <svg width="14" height="14" viewBox="0 0 14 14" fill="none" stroke="#fff" strokeWidth="1.200">
              <rect x=".6" y="2.800" width="10.400" height="10.400" rx="2" />
              <path d="M3.500.8h6.500a3 3 0 0 1 3 3v6.500" />
            </svg>
          </WindowButton>
          <WindowButton><svg width="14" height="14" viewBox="0 0 14 14" stroke="#fff" strokeWidth="1.200"><path d="M.6.6l12.800 12.800M13.400.6L.6 13.400" /></svg></WindowButton>
        </WindowControls>
      </TabStrip>

      <ToolbarBack>
        <Toolbar>
          <ToolButton $w={31}><MdArrowBack size={21} /></ToolButton>
          <ToolButton $w={59} $dim><MdArrowForward size={21} /></ToolButton>
          <ToolButton $w={31}><MdRefresh size={22} /></ToolButton>
          <ToolButton $w={17} />
          <Omnibox>
            <SiteInfo><InfoIcon /></SiteInfo>
            <Url><b>localhost</b>:3000/cultivation-guidance</Url>
            <OmniIcon><InstallIcon /></OmniIcon>
            <OmniIcon><MdStarBorder size={23} /></OmniIcon>
          </Omnibox>
          <ToolButton $w={67}><PuzzleIcon /></ToolButton>
          <ToolDivider />
          <ToolButton $w={65}><ToolDownloadIcon /></ToolButton>
          <ToolButton $w={25}><Avatar><MdPerson size={21} /></Avatar></ToolButton>
          <ToolButton $w={64}><MdMoreVert size={25} /></ToolButton>
        </Toolbar>
      </ToolbarBack>

      <Page>
        <Header>
          <Brand>Agro<Seedling />Arogya</Brand>
          <Nav>
            <NavLink $w={116} $ls={-0.35}>Product</NavLink>
            <NavLink $w={130.5} $ls={-0.5}>Feedback</NavLink>
            <NavLink $w={146} $ls={-0.55}>References</NavLink>
            <LoginButton>Login</LoginButton>
          </Nav>
        </Header>
        <Main>
          <Title>Cultivation</Title>
          <CropTabs>
            {crops.map((c) => (
              <CropTab key={c.name} $active={c.name === "Wheat"} $ls={c.ls}>{c.name}</CropTab>
            ))}
          </CropTabs>
          <Card>
            <CardTitle>Wheat</CardTitle>
            {tips.map((t) => (
              <Tip key={t.label} $ls={t.ls} $bls={t.bls}>
                <strong>{t.label}</strong> {t.text}
              </Tip>
            ))}
          </Card>
        </Main>
      </Page>

      <Taskbar>
        <WindowsLogo />
        <SearchPill>
          <Magnifier />
          <SearchLabel>Search</SearchLabel>
          <SearchArt />
        </SearchPill>
        <Apps>
          {apps.map((a, i) => (
            <AppSlot key={i} $focused={a.focused}>
              {a.icon}
              {a.running && <Running $focused={a.focused} />}
            </AppSlot>
          ))}
        </Apps>
        <Tray>
          <TrayItem $w={38}><ChevronUp /></TrayItem>
          <TrayItem $w={40}><LocationIcon /></TrayItem>
          <TrayText $w={58} $ls={-0.2}>ENG<br />IN</TrayText>
          <TrayItem $w={36}><WifiIcon /></TrayItem>
          <TrayItem $w={24}><VolumeIcon /></TrayItem>
          <TrayItem $w={38}><BatteryIcon /></TrayItem>
          <TrayText $w={81} $right $ls={-0.22}>11:14 AM<br />8/12/2024</TrayText>
          <TrayItem $w={37}><BellIcon /></TrayItem>
          <TrayItem $w={49}><CopilotIcon /></TrayItem>
        </Tray>
      </Taskbar>
    </Screen>
  );
}
